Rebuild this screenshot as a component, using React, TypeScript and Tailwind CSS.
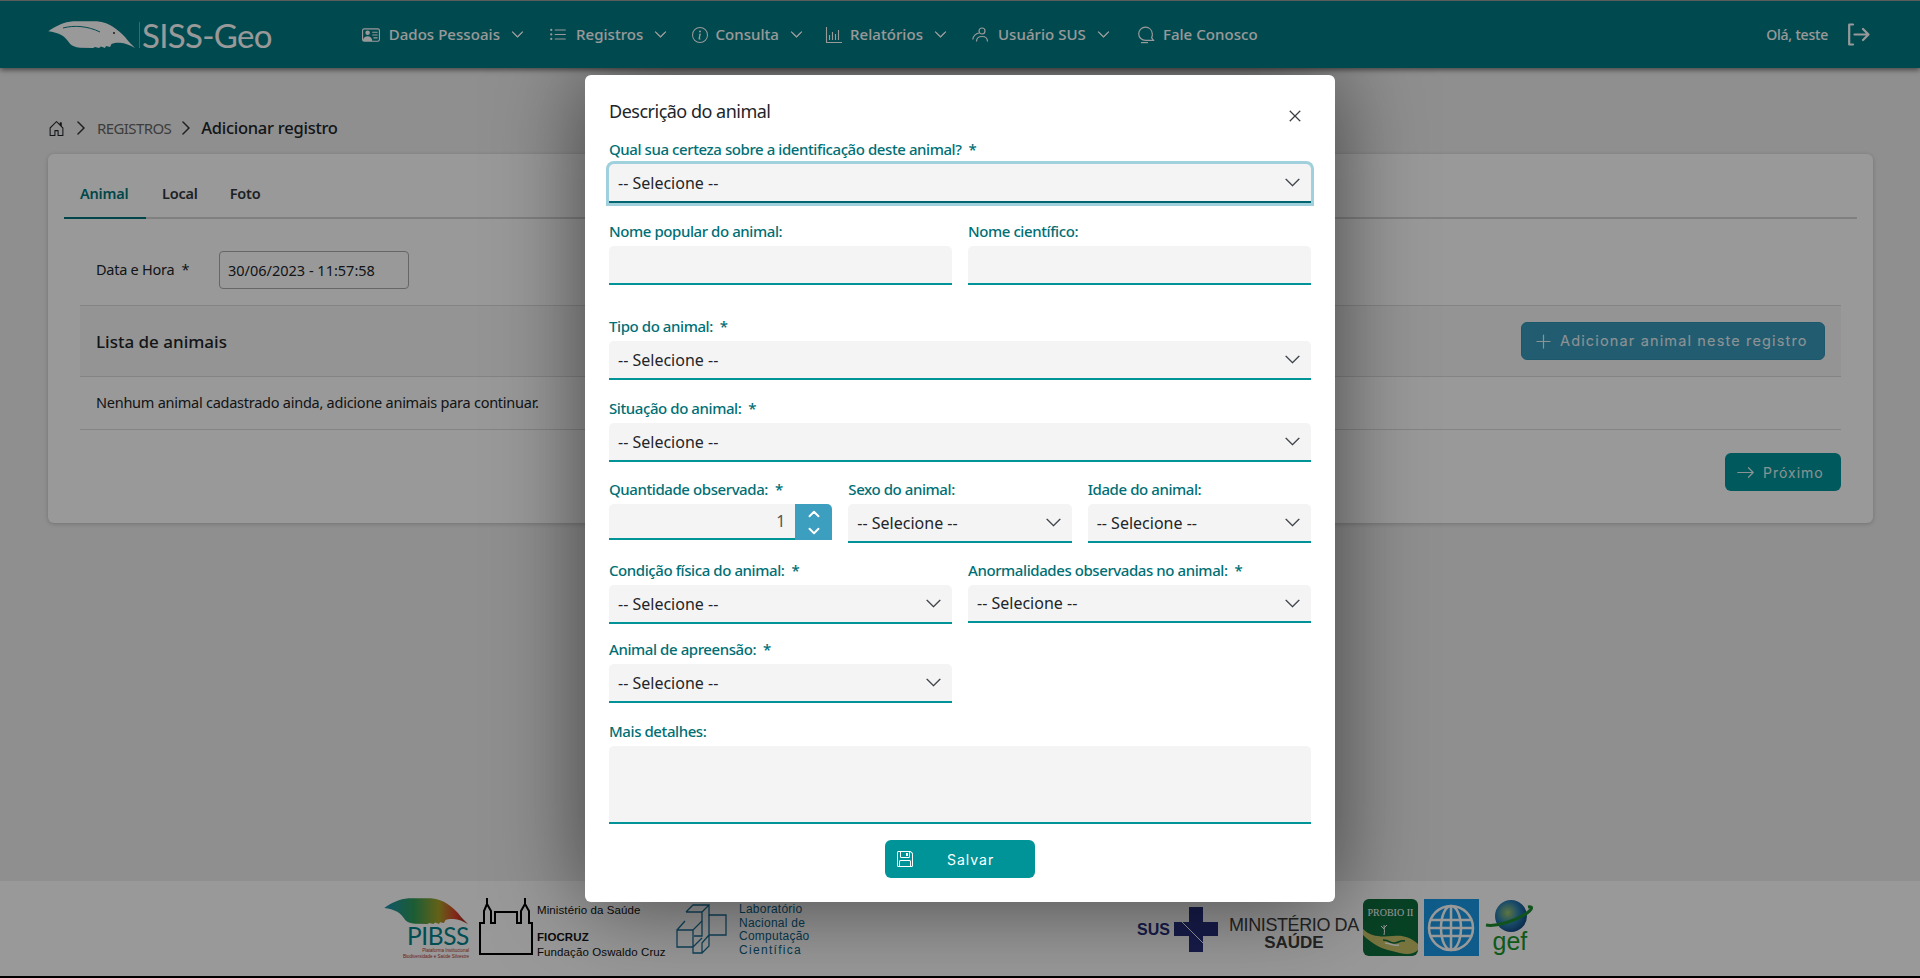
import React from "react";
import { BsPersonVcard, BsListUl, BsInfoCircle, BsChevronDown, BsChevronUp, BsChevronRight, BsXLg, BsPlusLg, BsArrowRight, BsFloppy, BsHouseDoor } from "react-icons/bs";

const sans = "font-['Noto_Sans','Liberation_Sans',sans-serif]";
const btn = "font-['Inter','Liberation_Sans',sans-serif]";

const anteaterPath =
  "M.3 11.300C8 6 16 2 25.300 1.300L48.700 1.300C56 2 61 4 65.300 7C70 10 74 14 77 17C80 21 84 25 87 28C82 25 77 23 72 22.700C68 22.500 66 23 63.700 23.700L62 27L58 26L57 28L53 26.500L51 28L47 27L45 28L32 27.700C27 27 24 26 22 23.700C19 20 17 17 13.700 15.300C10 13 5 12 .3 11.300Z";

function BarsIcon() {
  return (
    <svg width="18" height="18" viewBox="0 0 18 18" fill="none" stroke="currentColor" strokeWidth="1.1">
      <path d="M1.500 1v15.500H17" />
      <path d="M4.500 14V9M7.500 14V6M10.500 14V8M13.500 14V4" />
    </svg>
  );
}
function UsersIcon() {
  return (
    <svg width="18" height="18" viewBox="0 0 18 18" fill="none" stroke="currentColor" strokeWidth="1.2">
      <circle cx="10" cy="5" r="3" />
      <path d="M4.500 15.500c0-3.400 2.400-5 5.500-5s5.500 1.600 5.500 5" />
      <path d="M6.800 7.200C4 7.600 1 10 .8 13.500" />
    </svg>
  );
}
function ChatIcon() {
  return (
    <svg width="18" height="18" viewBox="0 0 18 18" fill="none" stroke="currentColor" strokeWidth="1.2">
      <path d="M8.500 1.200c-3.800 0-6.800 3-6.800 6.600 0 3.700 3 6.600 6.800 6.600h8l-1.900-2.800c.6-1.100.9-2.400.7-3.800C15 4 12.200 1.200 8.500 1.200z" />
      <path d="M4 16.600h7" />
    </svg>
  );
}
function LogoutIcon() {
  return (
    <svg width="23" height="23" viewBox="0 0 23 23" fill="none" stroke="currentColor" strokeWidth="2.200" strokeLinecap="round" strokeLinejoin="round">
      <path d="M6 1.500H2.200v20H6" />
      <path d="M7.500 11.500h14M16 6l5.500 5.500L16 17" />
    </svg>
  );
}
function Anteater() {
  return (
    <svg width="88" height="30" viewBox="0 0 88 30">
      <path fill="#ffffff" d={anteaterPath} />
      <path d="M15 8C26 5 40 6 52 12" fill="none" stroke="#007b84" strokeWidth="1" />
      <circle cx="66" cy="13" r="1" fill="#333" />
    </svg>
  );
}

function Field({ label, className = "", children }: { label: string; className?: string; children: React.ReactNode }) {
  return (
    <div className={className}>
      <label className={`block h-5 mb-1 text-[15px] leading-[18px] font-medium text-[#006f75] whitespace-pre tracking-[-0.42px] ${sans}`}>{label}</label>
      {children}
    </div>
  );
}

function Select({ focus = false, height = "h-[39px]" }: { focus?: boolean; height?: string }) {
  return (
    <div
      role="combobox"
      className={`w-full ${height} flex items-center justify-between pl-[9px] pr-[10px] bg-[#f4f4f4] rounded-t-[5px] text-[16px] text-[#212529] ${sans} border-b-2 ${
        focus ? "border-[#00666f] shadow-[0_0_0_3px_#9fd0dc]" : "border-[#009499]"
      }`}
    >
      <span>-- Selecione --</span>
      <BsChevronDown className="text-[#343a40] text-[17px] stroke-[0.3px]" />
    </div>
  );
}

function TextInput() {
  return <input type="text" className="w-full h-[39px] block bg-[#f4f4f4] rounded-t-[5px] border-b-2 border-[#009499] outline-none" />;
}

function NavItem({ icon, label, chevron = true, gap = "", iconGap }: { icon: React.ReactNode; label: string; chevron?: boolean; gap?: string; iconGap: string }) {
  return (
    <a className={`flex items-center text-[15px] tracking-[0.05px] text-white font-medium ${gap}`}>
      <span className="w-[18px] flex justify-center">{icon}</span>
      <span className={iconGap}>{label}</span>
      {chevron && <BsChevronDown className="ml-[11px] text-[13px] stroke-[1px]" />}
    </a>
  );
}

function FooterLogos() {
  return (
    <footer className="h-[95px] shrink-0 bg-white flex items-start pl-[383px] relative z-0">
      <div className="w-[86px] mt-[16px] flex flex-col items-end">
        <svg width="85" height="29" viewBox="0 0 88 30">
          <defs>
            <linearGradient id="pib" x1="0" x2="1" y1="0" y2="0">
              <stop offset="0" stopColor="#1c8fb0" />
              <stop offset="0.35" stopColor="#2e9a5a" />
              <stop offset="0.65" stopColor="#a7a227" />
              <stop offset="0.85" stopColor="#d9422a" />
              <stop offset="1" stopColor="#8c2a1a" />
            </linearGradient>
          </defs>
          <path fill="url(#pib)" d={anteaterPath} />
        </svg>
        <span className="mt-[-2px] h-[24px] text-[24.500px] leading-[24px] text-[#00838a] tracking-[-0.4px] font-['Lato',sans-serif]">PIBSS</span>
        <span className="text-[4.500px] leading-[6px] text-[#b3341f] whitespace-nowrap font-['Liberation_Sans',sans-serif]">Plataforma Institucional</span>
        <span className="text-[4.500px] leading-[6px] text-[#b3341f] whitespace-nowrap font-['Liberation_Sans',sans-serif]">Biodiversidade e Saúde Silvestre</span>
      </div>
      <svg className="ml-[10px] mt-[16px]" width="55" height="58" viewBox="0 0 55 58" fill="none" stroke="#000" strokeWidth="2">
        <path d="M1 57V26h4V14l3-7V1v6l4 7v12h4V15h22v11h4V14l4-7V1v6l4 7v12h3v31z" />
      </svg>
      <div className="ml-[3px] mt-[22px] w-[135px] text-[#111] text-[11.500px] tracking-[0.1px] font-['Liberation_Sans',sans-serif]">
        <div className="leading-[14px]">Ministério da Saúde</div>
        <div className="leading-[14px] mt-[13px] font-bold">FIOCRUZ</div>
        <div className="leading-[14px] mt-[1px]">Fundação Oswaldo Cruz</div>
      </div>
      <svg className="ml-[4px] mt-[23px]" width="52" height="52" viewBox="0 0 52 52" fill="none" stroke="#1b6f96" strokeWidth="1.300">
        <path d="M10 8h16v24h-8M10 8l7-7h16v10M26 8l7-7v10h17v20H33" />
        <path d="M1 26h16v17H1zM1 26l8-9M17 26l9-9M17 43l9-9M33 11v20l-7 8v10H17v-6M17 49h9M26 49l7-7v-11" />
      </svg>
      <div className="ml-[11px] mt-[22px] w-[68px] text-[#0d5f86] text-[12px] leading-[13.500px] tracking-[0.25px] whitespace-nowrap font-['Liberation_Sans',sans-serif]">
        <div>Laboratório</div>
        <div>Nacional de</div>
        <div>Computação</div>
        <div className="tracking-[1.300px]">Científica</div>
      </div>

      <span className="ml-[330px] mt-[40px] text-[16px] leading-[18px] font-extrabold text-[#27307e] font-['Liberation_Sans',sans-serif]">SUS</span>
      <svg className="ml-[4px] mt-[26px]" width="44" height="45" viewBox="0 0 44 45">
        <path fill="#27307e" d="M15 0h14v15h15v14H29v16H15V29H0V15h15z" />
        <path d="M8 15l22 22" stroke="#fff" strokeWidth="1" />
      </svg>
      <div className="ml-[10px] mt-[35px] w-[132px] flex flex-col items-center font-['Liberation_Sans',sans-serif] text-[#3c3c3c]">
        <span className="text-[18px] leading-[18px] tracking-[-0.4px] whitespace-nowrap">MINISTÉRIO DA</span>
        <span className="text-[17px] leading-[18px] font-bold">SAÚDE</span>
      </div>
      <div className="ml-[3px] mt-[18px] w-[55px] h-[57px] rounded-[6px] bg-[#0e6e3e] flex flex-col items-center overflow-hidden">
        <span className="mt-[8px] text-[10px] leading-[12px] text-white whitespace-nowrap font-['Liberation_Serif',serif]">PROBIO II</span>
        <svg width="55" height="37" viewBox="0 0 55 37">
          <path d="M21 16c1-4 0-7 0-10M21 9l3-3M21 10l-3-3" stroke="#fff" fill="none" />
          <path fill="#c9c46a" d="M0 10c8 8 18 8 30 7 8-1 16 0 25 8v6c-6 6-16 4-26 1C18 30 8 24 0 16z" />
          <path fill="none" stroke="#0e6e3e" strokeWidth="1.500" d="M20 21c8 0 6 4 12 3s4-3 10-2" />
          <path fill="none" stroke="#fff" strokeWidth="1.500" d="M22 24c8 1 8 3 14 2" />
        </svg>
      </div>
      <div className="ml-[6px] mt-[18px] w-[55px] h-[57px] bg-[#1999e6] flex items-center justify-center">
        <svg width="48" height="48" viewBox="0 0 48 48" fill="none" stroke="#fff" strokeWidth="2.500">
          <circle cx="24" cy="24" r="22" />
          <ellipse cx="24" cy="24" rx="10" ry="22" />
          <path d="M24 2v44M3 16h42M3 32h42M2 24h44" />
        </svg>
      </div>
      <div className="ml-[5px] mt-[18px] w-[52px] flex flex-col items-center">
        <svg width="52" height="34" viewBox="0 0 52 34">
          <defs>
            <radialGradient id="gl" cx="0.4" cy="0.4" r="0.7">
              <stop offset="0" stopColor="#9cc46b" />
              <stop offset="0.5" stopColor="#2c7fb0" />
              <stop offset="1" stopColor="#0b3a78" />
            </radialGradient>
          </defs>
          <circle cx="27" cy="17" r="16" fill="url(#gl)" />
          <path d="M2 26c10 2 28-4 38-10 8-5 10-9 4-8" fill="none" stroke="#1b8a2f" strokeWidth="3" />
        </svg>
        <span className="-mt-[4px] text-[25px] leading-[24px] text-[#1a962b] font-['Liberation_Sans',sans-serif]">gef</span>
      </div>
    </footer>
  );
}

export default function App() {
  return (
    <div className={`relative h-[978px] w-[1920px] overflow-hidden flex flex-col bg-[#eeeeee] ${sans}`}>
      <header className="h-[68px] shrink-0 bg-[#007b84] border-t border-[#999999] flex items-center text-white shadow-[0_2px_5px_rgba(0,0,0,0.5)] z-10">
        <div className="ml-[48px] flex items-center text-white">
          <Anteater />
          <span className="ml-[3px] h-[26px] w-px bg-white/40" />
          <span className="ml-[2px] text-[33px] leading-[40px] font-['Lato',sans-serif] tracking-[-0.7px]">SISS-Geo</span>
        </div>
        <nav className="ml-[90px] flex items-center">
          <NavItem iconGap="ml-[9px]" icon={<BsPersonVcard className="text-[18px]" />} label="Dados Pessoais" />
          <NavItem iconGap="ml-[9px]" gap="ml-[25px]" icon={<BsListUl className="text-[18px]" />} label="Registros" />
          <NavItem iconGap="ml-[6px]" gap="ml-[24px]" icon={<BsInfoCircle className="text-[16px]" />} label="Consulta" />
          <NavItem iconGap="ml-[7px]" gap="ml-[22px]" icon={<BarsIcon />} label="Relatórios" />
          <NavItem iconGap="ml-[8px]" gap="ml-[25px]" icon={<UsersIcon />} label="Usuário SUS" />
          <NavItem iconGap="ml-[8px]" gap="ml-[27px]" icon={<ChatIcon />} label="Fale Conosco" chevron={false} />
        </nav>
        <div className="ml-auto mr-[50px] flex items-center">
          <span className="text-[14px] font-medium tracking-[-0.2px]">Olá, teste</span>
          <span className="ml-[19px]"><LogoutIcon /></span>
        </div>
      </header>

      <main className="flex-1 min-h-0 pl-[48px] pr-[47px]">
        <div className="h-[86px] pt-[34px] flex items-center text-[#212529]">
          <BsHouseDoor className="text-[17px]" />
          <BsChevronRight className="ml-[8px] text-[16px] stroke-[0.5px]" />
          <span className="ml-[8px] text-[15px] text-[#666] tracking-[-0.6px]">REGISTROS</span>
          <BsChevronRight className="ml-[7px] text-[16px] stroke-[0.5px]" />
          <span className="ml-[7px] text-[16.500px] font-medium tracking-[-0.25px]">Adicionar registro</span>
        </div>

        <section className="h-[369px] bg-white rounded-[6px] shadow-[0_1px_4px_rgba(0,0,0,0.2)] px-4">
          <div className="h-[65px] flex border-b-2 border-[#d5d5d5] text-[14.500px] font-semibold tracking-[-0.2px] text-[#33383d]">
            <a className="px-4 pt-[16px] h-[65px] w-[82px] flex items-center text-[#00767c] border-b-2 border-[#00767c]">Animal</a>
            <a className="px-4 pt-[16px] flex items-center">Local</a>
            <a className="px-4 pt-[16px] flex items-center">Foto</a>
          </div>
          <div className="mt-[32px] flex items-center pl-[32px] text-[#212529]">
            <span className="w-[123px] text-[14.500px] tracking-[-0.25px] whitespace-pre">Data e Hora  *</span>
            <input readOnly value="30/06/2023 - 11:57:58" className="w-[190px] h-[38px] pl-[8px] rounded-[4px] border border-[#aaaaaa] text-[14.500px] tracking-[0] text-[#212529] outline-none" />
          </div>
          <div className="mx-4 mt-[16px]">
            <div className="h-[72px] flex items-center justify-between px-4 bg-[#f7f7f7] border-y border-[#dddddd]">
              <span className="mt-px text-[17px] font-medium text-[#212529]">Lista de animais</span>
              <button className={`w-[304px] h-[38px] flex items-center pl-[12px] rounded-[6px] bg-[#3a9abb] border border-[#2d93b5] text-white/90 text-[14.500px] tracking-[1.150px] whitespace-nowrap ${btn}`}>
                <BsPlusLg className="text-[19px]" />
                <span className="ml-[7px]">Adicionar animal neste registro</span>
              </button>
            </div>
            <div className="h-[53px] flex items-center pl-4 border-b border-[#dddddd] text-[14.500px] tracking-[-0.25px] text-[#212529]">
              Nenhum animal cadastrado ainda, adicione animais para continuar.
            </div>
            <div className="mt-[23px] flex justify-end">
              <button className={`w-[116px] h-[38px] flex items-center pl-[11px] rounded-[6px] bg-[#009499] text-white/90 text-[14px] tracking-[1px] ${btn}`}>
                <BsArrowRight className="text-[19px]" />
                <span className="ml-[8px]">Próximo</span>
              </button>
            </div>
          </div>
        </section>
      </main>

      <FooterLogos />
      <div className="h-[2px] shrink-0 bg-black" />

      <div className="absolute inset-0 z-20 bg-black/40 pt-[68px]">
        <div className="h-full overflow-hidden flex justify-center items-start pt-[7px]">
          <div className="w-[750px] h-[827px] bg-white rounded-[6px] shadow-[0_0_90px_rgba(0,0,0,0.55)] px-[24px] pt-[24px] pb-[24px]">
            <div className="h-6 flex items-start justify-between">
              <h2 className="text-[18px] leading-6 tracking-[-0.5px] text-[#212529]">Descrição do animal</h2>
              <BsXLg className="mt-[10px] mr-[9px] text-[14px] text-[#212529] stroke-[0.5px]" />
            </div>

            <Field label="Qual sua certeza sobre a identificação deste animal?  *" className="mt-[17px]">
              <Select focus />
            </Field>

            <div className="mt-[19px] grid grid-cols-2 gap-x-4">
              <Field label="Nome popular do animal:"><TextInput /></Field>
              <Field label="Nome científico:"><TextInput /></Field>
            </div>

            <Field label="Tipo do animal:  *" className="mt-[32px]"><Select /></Field>
            <Field label="Situação do animal:  *" className="mt-[19px]"><Select /></Field>

            <div className="mt-[18px] grid grid-cols-3 gap-x-4">
              <Field label="Quantidade observada:  *">
                <div className="h-[36px] flex border-b-2 border-[#009499] rounded-t-[5px] bg-[#f4f4f4]">
                  <input readOnly value="1" className="min-w-0 flex-1 pr-[10px] text-right text-[16px] text-[#555] outline-none bg-transparent" />
                  <div className="w-[37px] -mb-[2px] h-[36px] bg-[#3c9fbf] rounded-tr-[5px] flex flex-col items-center justify-center gap-[5px] text-white">
                    <BsChevronUp className="text-[12px] stroke-[1.5px]" />
                    <BsChevronDown className="text-[12px] stroke-[1.5px]" />
                  </div>
                </div>
              </Field>
              <Field label="Sexo do animal:"><Select /></Field>
              <Field label="Idade do animal:"><Select /></Field>
            </div>

            <div className="mt-[18px] grid grid-cols-2 gap-x-4">
              <Field label="Condição física do animal:  *"><Select /></Field>
              <Field label="Anormalidades observadas no animal:  *"><Select height="h-[38px]" /></Field>
            </div>

            <div className="mt-[16px] grid grid-cols-2 gap-x-4">
              <Field label="Animal de apreensão:  *"><Select /></Field>
            </div>

            <Field label="Mais detalhes:" className="mt-[19px]">
              <textarea className="block w-full h-[78px] bg-[#f4f4f4] rounded-t-[5px] border-b-2 border-[#009499] resize-none outline-none" />
            </Field>

            <div className="mt-[16px] flex justify-center">
              <button className={`w-[150px] h-[38px] flex items-center pl-[12px] rounded-[6px] bg-[#009499] text-white text-[14px] tracking-[1px] ${btn}`}>
                <BsFloppy className="text-[16px]" />
                <span className="ml-[34px]">Salvar</span>
              </button>
            </div>
          </div>
        </div>
      </div>
    </div>
  );
}
